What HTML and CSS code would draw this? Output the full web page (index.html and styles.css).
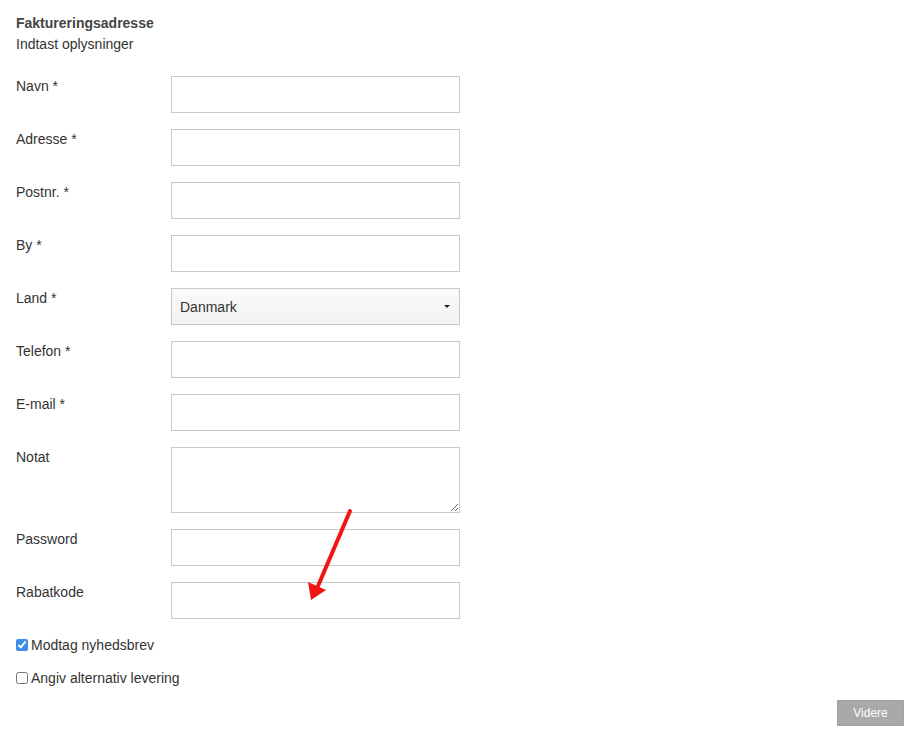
FILE: index.html
```html
<!DOCTYPE html>
<html lang="da">
<head>
    <meta charset="UTF-8">
    <meta name="viewport" content="width=device-width, initial-scale=1.0">
    <title>Faktureringsadresse</title>
    <link rel="stylesheet" href="styles.css">
</head>
<body>
    <div class="page">
        <div class="form-head">
            <div class="form-title">Faktureringsadresse</div>
            <div class="form-subtitle">Indtast oplysninger</div>
        </div>

        <div class="form-grid">
            <label for="navn">Navn *</label>
            <input type="text" id="navn">

            <label for="adresse">Adresse *</label>
            <input type="text" id="adresse">

            <label for="postnr">Postnr. *</label>
            <input type="text" id="postnr">

            <label for="by">By *</label>
            <input type="text" id="by">

            <label for="land">Land *</label>
            <div class="select-wrap">
                <select id="land">
                    <option>Danmark</option>
                    <option>Sverige</option>
                    <option>Norge</option>
                </select>
            </div>

            <label for="telefon">Telefon *</label>
            <input type="text" id="telefon">

            <label for="email">E-mail *</label>
            <input type="text" id="email">

            <label for="notat">Notat</label>
            <textarea id="notat"></textarea>

            <label for="password">Password</label>
            <input type="password" id="password">

            <label for="rabatkode">Rabatkode</label>
            <input type="text" id="rabatkode">
        </div>

        <div class="checks">
            <label class="check"><input type="checkbox" checked> Modtag nyhedsbrev</label>
            <label class="check"><input type="checkbox"> Angiv alternativ levering</label>
        </div>

        <div class="actions">
            <button class="btn-next">Videre</button>
        </div>

        <!-- annotation arrow -->
        <svg class="arrow" width="913" height="733" viewBox="0 0 913 733">
            <line x1="350" y1="511" x2="318" y2="586" stroke="#f01414" stroke-width="4" stroke-linecap="round"/>
            <polygon points="311,600 308,582 326,590" fill="#f01414"/>
        </svg>
    </div>
</body>
</html>
```

FILE: styles.css
```css
body {
    font-family: "Liberation Sans", Arial, sans-serif;
    font-size: 14px;
    color: #333;
    background-color: #fff;
    margin: 0;
    padding: 0;
}

.page {
    position: relative;
    width: 913px;
    height: 733px;
    box-sizing: border-box;
    padding: 13px 9px 0 16px;
}

.form-head {
    margin-bottom: 21px;
}

.form-title {
    font-size: 14px;
    font-weight: bold;
    line-height: 20px;
    color: #444;
}

.form-subtitle {
    line-height: 22px;
}

.form-grid {
    display: grid;
    grid-template-columns: 155px 289px;
    row-gap: 16px;
    align-items: start;
}

.form-grid label {
    line-height: 20px;
}

.form-grid input,
.form-grid textarea,
.form-grid select {
    width: 100%;
    height: 37px;
    box-sizing: border-box;
    border: 1px solid #c8c8c8;
    border-radius: 0;
    background-color: #fff;
    font-family: "Liberation Sans", Arial, sans-serif;
    font-size: 14px;
    color: #333;
    padding: 6px 8px;
    margin: 0;
}

.form-grid textarea {
    height: 66px;
    resize: vertical;
    display: block;
}

.select-wrap {
    position: relative;
}

.form-grid select {
    appearance: none;
    -webkit-appearance: none;
    background: linear-gradient(#fafafa, #f2f2f2);
    display: block;
}

.select-wrap::after {
    content: "";
    position: absolute;
    right: 10px;
    top: 17px;
    border-left: 3px solid transparent;
    border-right: 3px solid transparent;
    border-top: 3px solid #222;
}

.checks {
    display: flex;
    flex-direction: column;
    gap: 13px;
    margin-top: 16px;
}

.check {
    display: flex;
    align-items: center;
    line-height: 20px;
    gap: 3px;
}

.check input {
    width: 12px;
    height: 12px;
    margin: 0;
    accent-color: #3b8ee8;
}

.actions {
    display: flex;
    justify-content: flex-end;
    margin-top: 12px;
}

.btn-next {
    width: 67px;
    height: 26px;
    background: #a9a9a9;
    border: 1px solid #a2a2a2;
    color: #fff;
    font-family: "Liberation Sans", Arial, sans-serif;
    font-size: 12px;
    padding: 0;
}

.arrow {
    position: absolute;
    left: 0;
    top: 0;
    pointer-events: none;
}
```
